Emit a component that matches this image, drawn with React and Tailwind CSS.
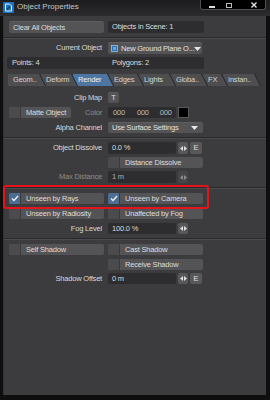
import React from "react";

const font = "font-['Liberation_Sans',Arial,sans-serif]";

// tab strip: width of each tab (they overlap 5px under the slant)
const tabs = [
    { label: "Geom..", w: 38 },
    { label: "Deform", w: 37 },
    { label: "Render", w: 41, active: true },
    { label: "Edges", w: 35 },
    { label: "Lights", w: 37 },
    { label: "Globa..", w: 37 },
    { label: "FX", w: 25 },
    { label: "Instan..", w: 38 },
];

function Check() {
    return (
        <svg width="8" height="7" viewBox="0 0 8 7">
            <polyline points="1,3.5 3,5.5 7,1" fill="none" stroke="#f0f0f0" strokeWidth="1.3" />
        </svg>
    );
}

function DownArrow() {
    return (
        <svg width="7" height="4" viewBox="0 0 7 4">
            <polygon points="0,0 7,0 3.5,4" fill="#e6e6e6" />
        </svg>
    );
}

function Arrows({ dim }) {
    return (
        <div className={`w-[10px] h-full rounded-[2px] flex items-center justify-center ${dim ? "bg-[#464648]" : "bg-[#58585a]"}`}>
            <svg width="7" height="5" viewBox="0 0 7 5">
                <polygon points="3,0 3,5 0,2.5" fill={dim ? "#8a8a8a" : "#dcdcdc"} />
                <polygon points="4,0 4,5 7,2.5" fill={dim ? "#8a8a8a" : "#dcdcdc"} />
            </svg>
        </div>
    );
}

function EBtn() {
    return (
        <div className="w-[12px] h-full rounded-[2px] bg-[#58585a] flex items-center justify-center text-[#e0e0e0]">
            E
        </div>
    );
}

function Btn({ children, className = "" }) {
    return (
        <div className={`h-full rounded-[2px] bg-[#545456] border-t border-[#5e5e60] flex items-center whitespace-nowrap overflow-hidden ${className}`}>
            {children}
        </div>
    );
}

function CheckBtn({ label, checked, w = "w-[95px]" }) {
    return (
        <div className={`${w} h-full rounded-[2px] bg-[#545456] flex items-stretch overflow-hidden whitespace-nowrap`}>
            <div className={`w-[12px] shrink-0 flex items-center justify-center border-r border-[#3a3a3c] ${checked ? "bg-[#4d6e93]" : "bg-[#4b4b4d]"}`}>
                {checked && <Check />}
            </div>
            <div className="flex-1 flex items-center pl-[5px] text-[#dcdcdc]">{label}</div>
        </div>
    );
}

function Label({ children, dim }) {
    return (
        <div className={`w-[95px] h-full flex items-center justify-end pr-[2px] whitespace-nowrap ${dim ? "text-[#8c8c8c]" : "text-[#d8d8d8]"}`}>
            {children}
        </div>
    );
}

function Field({ children, w = "w-[68px]", dim }) {
    return (
        <div className={`${w} h-full rounded-[2px] bg-[#2d2d2f] flex items-center pl-[4px] whitespace-nowrap ${dim ? "text-[#b0b0b0]" : "text-[#dcdcdc]"}`}>
            {children}
        </div>
    );
}

function Sep({ className = "" }) {
    return <div className={`w-full border-t border-[#29292b] border-b border-b-[#4c4c4e] ${className}`} />;
}

function ValueRow({ label, value, e = true, dim, className = "" }) {
    return (
        <div className={`flex h-[12px] pl-[5px] gap-[4px] ${className}`}>
            <Label dim={dim}>{label}</Label>
            <div className="flex h-full gap-[2px]">
                <Field dim={dim}>{value}</Field>
                <Arrows dim={dim} />
                {e && <EBtn />}
            </div>
        </div>
    );
}

export default function App() {
    return (
        <div className={`relative w-[270px] h-[400px] bg-[#0e0e0e] flex flex-col text-[7.5px] tracking-[-0.2px] leading-none ${font}`}>
            {/* title bar */}
            <div className="h-[16px] shrink-0 flex items-start bg-[linear-gradient(#1c1c1e,#2c2c2e)]">
                <svg className="ml-[3px] mt-[2px]" width="11" height="11" viewBox="0 0 11 11">
                    <rect width="11" height="11" rx="1" fill="#1d74c0" />
                    <path d="M2.5 2h4l2 2v5h-6z" fill="none" stroke="#e8eef6" strokeWidth="1" />
                    <path d="M4 7.5l3-3" stroke="#0c3e6c" strokeWidth="1.2" />
                </svg>
                <div className="ml-[3px] mt-[3px] text-[8px] tracking-[0px] text-[#c4c4c4]">Object Properties</div>
                <div className="ml-auto mr-[4px] w-[66px] h-[10px] bg-black border border-t-0 border-[#505050] rounded-b-[3px] flex items-center">
                    <div className="ml-[8px] mt-[5px] w-[6px] h-[2px] bg-[#dcdcdc]" />
                    <div className="ml-[11px] w-[6px] h-[5px] border border-[#bcbcbc] mt-[1px]" />
                    <svg className="ml-[19px]" width="6" height="6" viewBox="0 0 6 6">
                        <path d="M0.5 0.5l5 5M5.5 0.5l-5 5" stroke="#e6e6e6" strokeWidth="1.4" />
                    </svg>
                </div>
            </div>

            {/* body */}
            <div className="ml-[3px] mr-[4px] mb-[5px] flex-1 bg-[#3c3c3e] flex flex-col border-l border-[#333335]">
                <div className="flex h-[12px] mt-[5px] pl-[5px] gap-[4px]">
                    <Btn className="w-[95px] pl-[4px] text-[#dcdcdc]">Clear All Objects</Btn>
                    <Field w="w-[96px]">Objects in Scene: 1</Field>
                </div>

                <Sep className="mt-[4px]" />

                <div className="flex h-[12px] mt-[3px] pl-[5px] gap-[4px]">
                    <Label>Current Object</Label>
                    <Btn className="w-[94px] pl-[3px] text-[#e0e0e0]">
                        <svg className="shrink-0" width="7" height="7" viewBox="0 0 7 7">
                            <rect x="0.5" y="0.5" width="6" height="6" fill="#2f6fb0" stroke="#9cc4ec" strokeWidth="0.8" />
                            <rect x="2" y="2" width="3" height="3" fill="#6aa6e0" />
                        </svg>
                        <span className="ml-[3px]">New Ground Plane O...</span>
                        <span className="ml-auto mr-[4px] flex shrink-0"><DownArrow /></span>
                    </Btn>
                </div>

                <div className="flex h-[12px] mt-[3px] ml-[3px] w-[197px] rounded-[2px] bg-[#2d2d2f] text-[#dcdcdc]">
                    <div className="w-[101px] pl-[5px] flex items-center">Points: 4</div>
                    <div className="flex items-center pl-[4px]">Polygons: 2</div>
                </div>

                {/* tabs */}
                <div className="flex h-[12px] mt-[5px] pl-[4px]">
                    {tabs.map((t, i) => (
                        <div
                            key={t.label}
                            style={{ zIndex: 20 - i, width: t.w }}
                            className={`relative h-full bg-[#252527] [clip-path:polygon(0_0,calc(100%-6px)_0,100%_100%,0_100%)] ${i > 0 ? "-ml-[5px]" : ""}`}
                        >
                            <div
                                className={`h-full w-[calc(100%-1px)] pl-[5px] flex items-center whitespace-nowrap [clip-path:polygon(0_0,calc(100%-6px)_0,100%_100%,0_100%)] ${t.active ? "bg-[#4e76a3] text-[#f0f0f0]" : "bg-[#4e4e50] text-[#d4d4d4]"}`}
                            >
                                {t.label}
                            </div>
                        </div>
                    ))}
                </div>

                <div className="flex h-[11px] mt-[6px] pl-[5px] gap-[4px]">
                    <Label>Clip Map</Label>
                    <Btn className="w-[11px] justify-center text-[#e0e0e0]">T</Btn>
                </div>

                <div className="flex h-[11px] mt-[4px] pl-[5px] gap-[4px]">
                    <div className="w-[95px] h-full flex">
                        <CheckBtn label="Matte Object" w="w-[62px]" />
                        <div className="flex-1 flex items-center justify-end pr-[2px] text-[#8c8c8c]">Color</div>
                    </div>
                    <div className="flex h-full gap-[2px]">
                        <div className="w-[68px] h-full rounded-[2px] bg-[#2d2d2f] flex items-center text-[#bdbdbd]">
                            <span className="ml-[5px]">000</span>
                            <span className="ml-[12px]">000</span>
                            <span className="ml-[11px]">000</span>
                        </div>
                        <div className="w-[11px] h-full bg-black border border-[#5a5a5a]" />
                    </div>
                </div>

                <div className="flex h-[11px] mt-[4px] pl-[5px] gap-[4px]">
                    <Label>Alpha Channel</Label>
                    <Btn className="w-[95px] pl-[4px] text-[#e0e0e0]">
                        Use Surface Settings
                        <span className="ml-auto mr-[5px] flex shrink-0"><DownArrow /></span>
                    </Btn>
                </div>

                <Sep className="mt-[4px]" />

                <ValueRow label="Object Dissolve" value="0.0 %" className="mt-[3px]" />

                <div className="flex h-[11px] mt-[3px] pl-[5px] gap-[4px]">
                    <div className="w-[95px]" />
                    <CheckBtn label="Distance Dissolve" />
                </div>

                <ValueRow label="Max Distance" value="1 m" e={false} dim className="mt-[3px]" />

                <Sep className="mt-[4px]" />

                <div className="flex h-[11px] mt-[4px] pl-[5px] gap-[4px]">
                    <CheckBtn label="Unseen by Rays" checked />
                    <CheckBtn label="Unseen by Camera" checked />
                </div>

                <div className="flex h-[11px] mt-[4px] pl-[5px] gap-[4px]">
                    <CheckBtn label="Unseen by Radiosity" />
                    <CheckBtn label="Unaffected by Fog" />
                </div>

                <div className="flex h-[11px] mt-[4px] pl-[5px] gap-[4px]">
                    <Label>Fog Level</Label>
                    <div className="flex h-full gap-[2px]">
                        <Field>100.0 %</Field>
                        <Arrows />
                    </div>
                </div>

                <Sep className="mt-[4px]" />

                <div className="flex h-[11px] mt-[4px] pl-[5px] gap-[4px]">
                    <CheckBtn label="Self Shadow" />
                    <CheckBtn label="Cast Shadow" />
                </div>

                <div className="flex h-[11px] mt-[4px] pl-[5px] gap-[4px]">
                    <div className="w-[95px]" />
                    <CheckBtn label="Receive Shadow" />
                </div>

                <div className="flex h-[11px] mt-[3px] pl-[5px] gap-[4px]">
                    <Label>Shadow Offset</Label>
                    <div className="flex h-full gap-[2px]">
                        <Field>0 m</Field>
                        <Arrows />
                        <EBtn />
                    </div>
                </div>
            </div>

            {/* highlight annotation */}
            <div className="absolute left-[3px] top-[185px] w-[206px] h-[24px] border-2 border-[#e5141c] rounded-[3px]" />
        </div>
    );
}
